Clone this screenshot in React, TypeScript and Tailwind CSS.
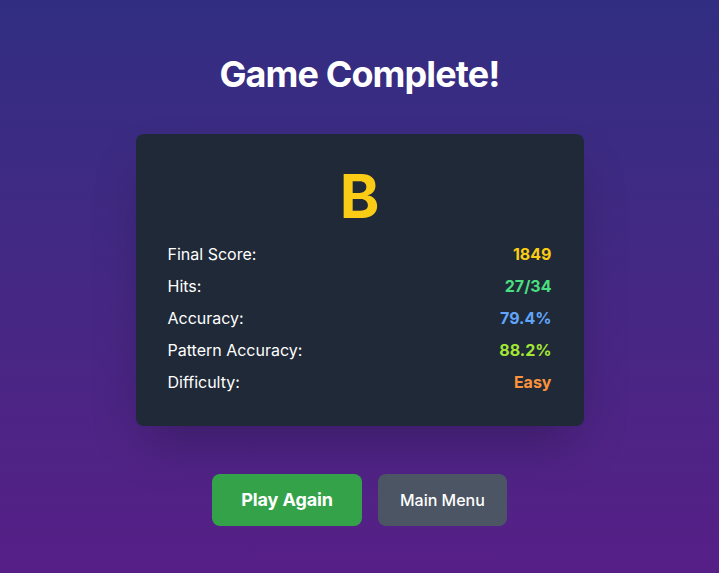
import React from 'react'

const stats = [
  { label: 'Final Score:', value: '1849', color: 'text-[#facc15]' },
  { label: 'Hits:', value: '27/34', color: 'text-[#4ade80]' },
  { label: 'Accuracy:', value: '79.4%', color: 'text-[#60a5fa]' },
  { label: 'Pattern Accuracy:', value: '88.2%', color: 'text-[#a3e635]' },
  { label: 'Difficulty:', value: 'Easy', color: 'text-[#fb923c]' },
]

export default function App() {
  return (
    <main className="min-h-screen bg-gradient-to-b from-[#312e81] to-[#561f87] flex flex-col items-center pt-[54px] text-white font-['Inter',sans-serif]">
      <h1 className="text-4xl font-bold mb-10 tracking-tight">Game Complete!</h1>

      <div className="w-[448px] bg-[#1f2937] rounded-lg p-8 shadow-2xl">
        <div className="text-6xl leading-none font-bold text-center text-[#facc15] mb-4">B</div>
        <div className="space-y-2">
          {stats.map((s) => (
            <div key={s.label} className="flex justify-between">
              <span>{s.label}</span>
              <span className={`font-bold ${s.color}`}>{s.value}</span>
            </div>
          ))}
        </div>
      </div>

      <div className="flex gap-4 mt-12">
        <button className="bg-[#34a249] rounded-lg px-[29px] py-3 text-lg font-bold tracking-[-0.005em]">
          Play Again
        </button>
        <button className="bg-[#4b5563] rounded-lg px-[22px] py-3 font-medium">
          Main Menu
        </button>
      </div>
    </main>
  )
}
